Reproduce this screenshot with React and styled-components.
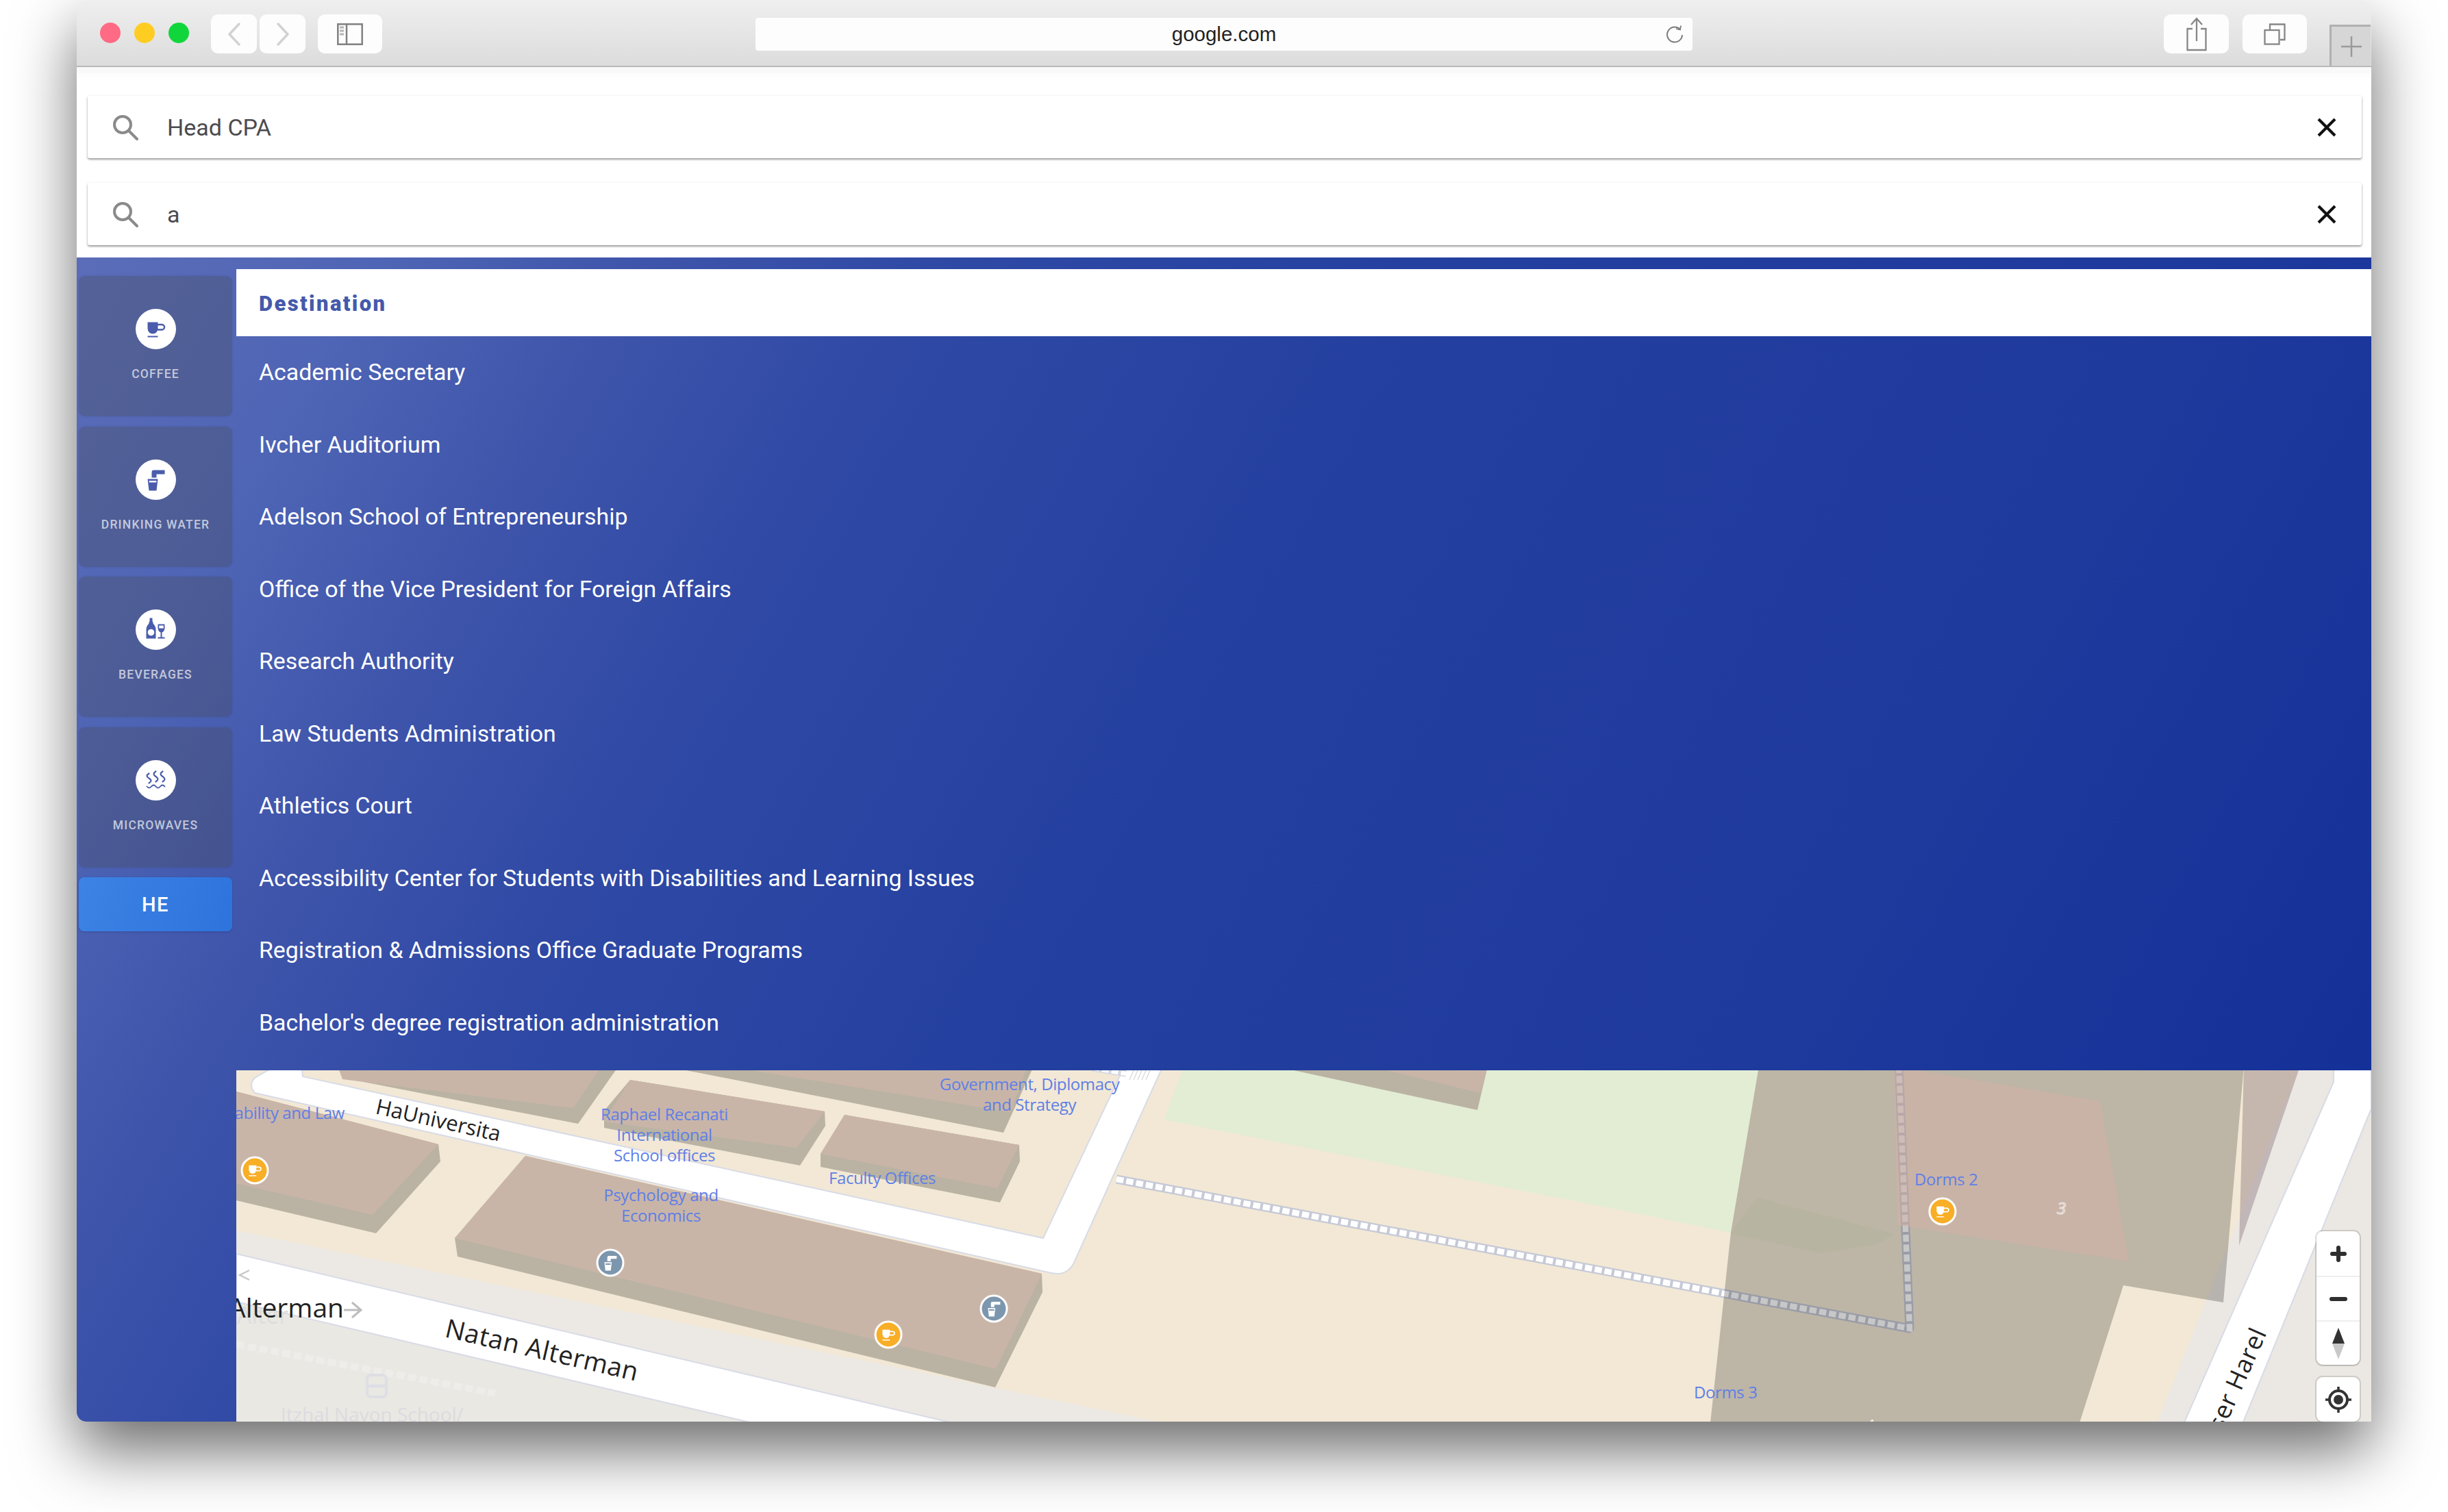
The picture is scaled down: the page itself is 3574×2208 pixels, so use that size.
import React from "react";
import styled, { createGlobalStyle } from "styled-components";

const Global = createGlobalStyle`
  html, body { margin: 0; padding: 0; background: #fff; }
  * { box-sizing: border-box; }
  body { font-family: Roboto, "Liberation Sans", sans-serif; }
`;

const Page = styled.div`
  width: 3574px;
  height: 2208px;
  padding: 0 112px;
  overflow: hidden;
  background: #fff;
`;
const Win = styled.div`
  width: 3350px;
  height: 2076px;
  display: flex;
  flex-direction: column;
  background: #fff;
  border-radius: 14px;
  box-shadow: 0 42px 92px rgba(0, 0, 0, 0.58);
`;
const Toolbar = styled.header`
  height: 98px;
  flex: none;
  display: flex;
  align-items: flex-start;
  padding: 21px 0 0 34px;
  background: linear-gradient(#efefef, #dcdcdc);
  border-bottom: 2px solid #b9b9b9;
  border-radius: 14px 14px 0 0;
`;
const Light = styled.span`
  width: 30px;
  height: 30px;
  margin: 12px 20px 0 0;
  border-radius: 50%;
  background: ${(p) => p.$c};
  flex: none;
`;
const ToolBtn = styled.button`
  width: ${(p) => p.$w}px;
  height: 57px;
  margin-left: ${(p) => p.$ml}px;
  flex: none;
  padding: 0;
  border: 0;
  border-radius: 10px;
  background: #fdfdfd;
  display: flex;
  align-items: center;
  justify-content: center;
`;
const Address = styled.div`
  width: 1368px;
  height: 48px;
  margin: 5px 688px 0 545px;
  flex: none;
  padding: 0 24px;
  position: relative;
  display: flex;
  align-items: center;
  justify-content: center;
  border-radius: 4px;
  background: #fdfdfd;
  color: #222;
  font: 400 29.5px "Liberation Sans", Arial, sans-serif;
`;
const Reload = styled.svg`
  position: absolute;
  right: 11px;
  top: 9px;
`;
const NewTab = styled.div`
  width: 60px;
  height: 60px;
  margin: 15px 0 0 33px;
  flex: none;
  display: flex;
  align-items: center;
  justify-content: center;
  background: #d6d6d6;
  border-top: 3px solid #b0b0b0;
  border-left: 3px solid #b0b0b0;
`;
const Searches = styled.div`
  flex: none;
  display: flex;
  flex-direction: column;
  gap: 36px;
  padding: 42px 14px 18px 16px;
  background: linear-gradient(#f9f9f9 0, #f9f9f9 9px, #fdfdfd 9px, #fdfdfd 15px, #fff 15px);
`;
const SearchBox = styled.div`
  height: 91px;
  display: flex;
  align-items: center;
  padding: 0 37px 0 36px;
  background: #fff;
  border-radius: 3px;
  box-shadow: 0 2px 3px rgba(0, 0, 0, 0.38), 0 0 4px rgba(0, 0, 0, 0.05);
`;
const SearchValue = styled.span`
  flex: 1;
  margin-left: 42px;
  color: #4b4b4f;
  font-size: 34px;
`;
const Main = styled.main`
  flex: 1;
  min-height: 0;
  display: grid;
  grid-template-columns: 233px 1fr;
  border-radius: 0 0 0 14px;
  overflow: hidden;
  background: linear-gradient(
    120deg,
    #5b6db9 0%,
    #4f65b5 10%,
    #3f55ab 19%,
    #2f49a5 29%,
    #233f9f 48%,
    #1f3a9d 72%,
    #112e97 100%
  );
`;
const Side = styled.nav`
  display: flex;
  flex-direction: column;
  gap: 14.5px;
  padding: 27px 6px 0 3px;
`;
const Card = styled.div`
  height: 205px;
  padding-top: 48px;
  display: flex;
  flex-direction: column;
  align-items: center;
  border-radius: 9px;
  background: rgba(72, 72, 80, 0.3);
  box-shadow: 0 0 3px rgba(40, 50, 100, 0.15);
`;
const Badge = styled.div`
  width: 59px;
  height: 59px;
  border-radius: 50%;
  background: #fff;
  display: flex;
  align-items: center;
  justify-content: center;
`;
const CardLabel = styled.span`
  margin-top: 26px;
  color: rgba(255, 255, 255, 0.68);
  font-size: 17.5px;
  line-height: 20px;
  font-weight: 500;
  letter-spacing: 1.2px;
`;
const Lang = styled.div`
  height: 79px;
  display: flex;
  align-items: center;
  justify-content: center;
  border-radius: 8px;
  background: linear-gradient(110deg, #3c83e4, #2e73dc);
  box-shadow: 0 1px 3px rgba(20, 40, 100, 0.3);
  color: #fff;
  font-size: 29px;
  font-weight: 500;
  letter-spacing: 1.4px;
`;
const Right = styled.section`
  min-width: 0;
  padding-top: 17px;
  display: flex;
  flex-direction: column;
`;
const ListHead = styled.div`
  height: 98px;
  flex: none;
  display: flex;
  align-items: center;
  padding: 3px 0 0 33px;
  background: #fff;
  color: #4559ab;
  font-size: 31px;
  font-weight: 900;
  letter-spacing: 2.4px;
`;
const Results = styled.ul`
  height: 1072px;
  flex: none;
  margin: 0;
  padding: 0 0 17px 33px;
  list-style: none;
  display: grid;
  grid-auto-rows: 1fr;
`;
const Result = styled.li`
  display: flex;
  align-items: center;
  color: #fff;
  font-size: 33.85px;
`;
const MapArea = styled.div`
  flex: 1;
  min-height: 0;
  position: relative;
  overflow: hidden;
  background: #f2e8d5;
`;
const MapSvg = styled.svg`
  display: block;
  width: 100%;
  height: 100%;
`;
const Controls = styled.div`
  position: absolute;
  left: 3037px;
  top: 235px;
  width: 63px;
  height: 195px;
  display: grid;
  grid-template-rows: 1fr 1fr 1fr;
  background: #fff;
  border-radius: 9px;
  box-shadow: 0 0 0 2px rgba(0, 0, 0, 0.12), 0 1px 2px rgba(0, 0, 0, 0.15);
`;
const ControlCell = styled.div`
  display: flex;
  align-items: center;
  justify-content: center;
  & + & {
    border-top: 2px solid #eeeeee;
  }
`;
const Locate = styled.div`
  position: absolute;
  left: 3037px;
  top: 448px;
  width: 63px;
  height: 65px;
  display: flex;
  align-items: center;
  justify-content: center;
  background: #fff;
  border-radius: 9px;
  box-shadow: 0 0 0 2px rgba(0, 0, 0, 0.12);
`;

const results = [
  "Academic Secretary",
  "Ivcher Auditorium",
  "Adelson School of Entrepreneurship",
  "Office of the Vice President for Foreign Affairs",
  "Research Authority",
  "Law Students Administration",
  "Athletics Court",
  "Accessibility Center for Students with Disabilities and Learning Issues",
  "Registration & Admissions Office Graduate Programs",
  "Bachelor's degree registration administration",
];

const SearchIcon = () => (
  <svg width="38" height="38" viewBox="0 0 38 38" fill="none" stroke="#8a8a8a" strokeWidth="4">
    <circle cx="15" cy="15" r="12" />
    <path d="M24 24l12 12" strokeLinecap="round" />
  </svg>
);
const CloseIcon = () => (
  <svg width="28" height="28" viewBox="0 0 28 28" stroke="#111" strokeWidth="4.2" strokeLinecap="butt">
    <path d="M2 2l24 24M26 2L2 26" />
  </svg>
);

const Coffee = ({ c = "#4a5cab" }) => (
  <g>
    <path fill={c} d="M-12-10H3V-1A7.5 8 0 0 1-12-1Z" />
    <rect x="0" y="-6.5" width="12.5" height="7.5" rx="3.7" fill="none" stroke={c} strokeWidth="2.4" />
    <rect x="-12" y="10" width="15" height="2" fill={c} />
  </g>
);
const Water = ({ c = "#4a5cab" }) => (
  <g fill={c}>
    <path d="M-6-11a3 3 0 0 1 3-3H13V-8H1V-3H-6Z" />
    <path d="M-12-1H3L1 16H-10ZM-10 1.500L-9.600 4H.6L1 1.500Z" fillRule="evenodd" />
  </g>
);
const Bottle = ({ c = "#4a5cab" }) => (
  <g>
    <path fill={c} d="M-9-17H-5V-12L-4-11V-9C-1-6 0-3 0 0V13H-14V0C-14-3-13-6-10-9V-11L-9-12Z" />
    <circle cx="-7" cy="4" r="4.800" fill="#fff" />
    <path fill="none" stroke={c} strokeWidth="1.800" d="M4-7H12C13 0 11 3 8 3S3 0 4-7Z" />
    <path fill={c} d="M4-2H12C12 1 10 3 8 3S4 1 4-2ZM7 3H9V11H13V13H3V11H7Z" />
  </g>
);
const Steam = ({ c = "#4a5cab" }) => (
  <g fill="none" stroke={c} strokeWidth="2.200" strokeLinecap="round">
    <path d="M-10-10c-4 2.500-4 4.500 0 7s4 4.500 0 7" />
    <path d="M0-13c-4 2.500-4 5 0 7.500s4 5 0 7.500" />
    <path d="M10-13c-4 2.500-4 5 0 7.500s4 5 0 7.500" />
    <path d="M-13 9q3.250 4 6.500 0t6.500 0t6.500 0t6.500 0" strokeWidth="1.800" />
  </g>
);
const Glyph = ({ children }) => (
  <svg width="59" height="59" viewBox="-29.500 -29.500 59 59">
    {children}
  </svg>
);

const cats = [
  ["COFFEE", <Coffee />],
  ["DRINKING WATER", <Water />],
  ["BEVERAGES", <Bottle />],
  ["MICROWAVES", <Steam />],
];

const Pin = ({ x, y, c, children }) => (
  <g transform={`translate(${x} ${y})`}>
    <circle r="19" fill={c} stroke="#fff" strokeWidth="3" />
    <g transform="scale(.72)">{children}</g>
  </g>
);

const Poly = ({ p, f, s, sw }) => <polygon points={p} fill={f} stroke={s} strokeWidth={sw} />;

const TOP = "#c9b5a8";
const SIDE = "#bab3a3";
const labelFont = '"Open Sans", "Noto Sans", sans-serif';

const Label = ({ x, y, a = "middle", children, size = 24 }) => (
  <text x={x} y={y} textAnchor={a} fill="#5f7fe6" fontFamily={labelFont} fontSize={size} letterSpacing="-0.4">
    {children}
  </text>
);
const Road = ({ x, y, r, size, a = "start", children, f = "#222", ls = 0 }) => (
  <text
    x={x}
    y={y}
    transform={r ? `rotate(${r} ${x} ${y})` : undefined}
    textAnchor={a}
    fill={f}
    fontFamily={labelFont}
    fontSize={size}
    letterSpacing={ls}
  >
    {children}
  </text>
);

const MapDrawing = () => (
  <MapSvg viewBox="345 1561 3117 513" preserveAspectRatio="none">
    <rect x="345" y="1555" width="3117" height="525" fill="#f2e8d5" />
    {/* park */}
    <Poly p="1728,1555 1700,1633 2400,1772 2527,1798 2568,1555" f="#e2edd4" />
    {/* sidewalks */}
    <Poly p="345,1795 1700,2076 345,2076" f="#ece8e4" />
    <Poly p="345,1899 1099,2076 345,2076" f="#e9e8e3" />
    <Poly p="3358,1555 3462,1555 3462,2076 3149,2076" f="#ebe7e2" />
    {/* buildings */}
    <Poly p="496,1555 500,1572 844,1639 903,1555" f={SIDE} />
    <Poly p="493,1555 500,1574 837,1616 878,1555" f={TOP} />
    <Poly p="971,1555 1465,1652 1509,1555" f={SIDE} />
    <Poly p="1060,1555 1475,1622 1500,1555" f={TOP} />
    <Poly p="920,1575 1204,1621 1205,1642 1168,1700 882,1645 882,1620" f={SIDE} />
    <Poly p="920,1575 1204,1621 1163,1674 882,1636" f={TOP} />
    <Poly p="1233,1626 1488,1670 1489,1694 1460,1754 1198,1702 1198,1683" f={SIDE} />
    <Poly p="1233,1626 1488,1670 1456,1733 1198,1683" f={TOP} />
    <Poly p="345,1592 640,1669 643,1694 549,1799 345,1751" f={SIDE} />
    <Poly p="345,1592 640,1669 544,1772 345,1726" f={TOP} />
    <Poly p="767,1686 1521,1858 1522,1885 1453,2024 668,1833 664,1806" f={SIDE} />
    <Poly p="767,1686 1521,1858 1454,1997 664,1806" f={TOP} />
    <Poly p="1861,1555 2157,1619 2172,1555" f={SIDE} />
    <Poly p="2000,1555 2161,1594 2172,1555" f={TOP} />
    {/* roads */}
    <path
      d="M410 1550H440L442 1570L1523 1806L1644 1550H1700L1567 1844Q1556 1862 1535 1857L372 1594Q362 1582 372 1572Z"
      fill="#fff"
      stroke="#d8dbe6"
      strokeWidth="2"
    />
    <g stroke="#dcdcdc" strokeWidth="1.500">
      <path d="M1655 1561l-6 14M1661 1561l-6 14M1667 1561l-6 14M1673 1561l-6 14M1679 1561l-6 14" />
    </g>
    <Poly p="345,1829 1391,2076 1099,2076 345,1899" f="#fff" s="#d8dbe6" sw="2" />
    {/* railway */}
    <g fill="none">
      <path d="M1595 1558L1644 1566" stroke="#d4d6df" strokeWidth="9" />
      <path d="M1595 1558L1644 1566" stroke="#fff" strokeWidth="6" strokeDasharray="10 4" />
      <path d="M1630 1720L2788 1938L2772 1550" stroke="#c6c9d6" strokeWidth="13" strokeLinejoin="round" />
      <path d="M1630 1720L2788 1938L2772 1550" stroke="#fff" strokeWidth="8.500" strokeDasharray="10.500 4" />
      <path d="M345 1961L723 2033" stroke="#eeedea" strokeWidth="10" strokeDasharray="12 5" />
    </g>
    {/* translucent overlay building */}
    <Poly p="2568,1555 3276,1555 3246,1900 3100,1875 3036,2076 2497,2076 2527,1798" f="rgba(0,0,0,0.22)" />
    <Poly p="3276,1555 3358,1555 3269,1817" f="rgba(60,30,50,0.24)" />
    <Poly p="2527,1798 2565,1747 2765,1800 2740,1815 2660,1828 2527,1800" f="rgba(120,180,110,0.09)" />
    <Poly p="2765,1555 3066,1606 3108,1840 2770,1787" f="rgba(213,178,168,0.5)" />
    {/* right road */}
    <Poly p="3407,1550 3462,1550 3462,1617 3272,2082 3186,2082 3407,1578" f="#fff" s="#d8dbe6" sw="2" />

    {/* road names */}
    <Road x="547" y="1624" r="12.700" size="31">HaUniversita</Road>
    <Road x="648" y="1950" r="13" size="38" ls="0.5">Natan Alterman</Road>
    <Road x="346" y="1931" size="34" f="#ddd">Alter</Road>
    <Road x="502" y="1922" a="end" size="39">Alterman</Road>
    <path d="M502 1911H526M514 1900L527 1911L514 1922" fill="none" stroke="#bdbdbd" strokeWidth="3" />
    <path d="M364 1853L350 1860L364 1867" fill="none" stroke="#c8c8c8" strokeWidth="2.500" />
    <Road x="3310" y="1944" r="-66" a="end" size="36" ls="0.8">Isser Harel</Road>
    <text x="410" y="2074" fill="#dcdbe0" fontFamily={labelFont} fontSize="28">Itzhal Navon School/</text>
    <g fill="none" stroke="#dedee5" strokeWidth="4">
      <rect x="536" y="2006" width="28" height="32" rx="6" />
      <path d="M538 2022H562" />
    </g>

    {/* place names */}
    <Label x="503" y="1632" a="end">ability and Law</Label>
    <Label x="970" y="1634">Raphael Recanati</Label>
    <Label x="970" y="1664">International</Label>
    <Label x="970" y="1694">School offices</Label>
    <Label x="965" y="1752">Psychology and</Label>
    <Label x="965" y="1782">Economics</Label>
    <Label x="1210" y="1727" a="start">Faculty Offices</Label>
    <Label x="1503" y="1590">Government, Diplomacy</Label>
    <Label x="1503" y="1620">and Strategy</Label>
    <Label x="2795" y="1729" a="start">Dorms 2</Label>
    <Label x="2473" y="2040" a="start">Dorms 3</Label>
    <text x="3003" y="1771" fill="none" stroke="#ece6e2" strokeWidth="1.200" fontFamily={labelFont} fontStyle="italic" fontSize="24">3</text>
    <text x="2724" y="2088" fill="#f6f2ea" fontFamily={labelFont} fontSize="24">4</text>

    {/* pins */}
    <Pin x={372} y={1707} c="#f8ae26"><Coffee c="#fff" /></Pin>
    <Pin x={1297} y={1947} c="#f8ae26"><Coffee c="#fff" /></Pin>
    <Pin x={2836} y={1767} c="#f8ae26"><Coffee c="#fff" /></Pin>
    <Pin x={891} y={1842} c="#7c96ad"><Water c="#fff" /></Pin>
    <Pin x={1451} y={1909} c="#7c96ad"><Water c="#fff" /></Pin>
  </MapSvg>
);

export default function App() {
  return (
    <Page>
      <Global />
      <Win>
        <Toolbar>
          <Light $c="#ff6a84" />
          <Light $c="#ffcd22" />
          <Light $c="#10d63c" />
          <ToolBtn $w={67} $ml={12}>
            <svg width="20" height="34" viewBox="0 0 20 34" fill="none" stroke="#d2d2d2" strokeWidth="3.500" strokeLinecap="round" strokeLinejoin="round">
              <path d="M17 2L3 17L17 32" />
            </svg>
          </ToolBtn>
          <ToolBtn $w={67} $ml={4}>
            <svg width="20" height="34" viewBox="0 0 20 34" fill="none" stroke="#d2d2d2" strokeWidth="3.500" strokeLinecap="round" strokeLinejoin="round">
              <path d="M3 2L17 17L3 32" />
            </svg>
          </ToolBtn>
          <ToolBtn $w={94} $ml={18}>
            <svg width="38" height="32" viewBox="0 0 38 32" fill="none" stroke="#808080" strokeWidth="2.500">
              <rect x="1.300" y="1.300" width="35.400" height="29.400" />
              <path d="M14 1V31" />
              <path d="M4 6H10M4 11H10M4 16H10" strokeWidth="3" stroke="#b5b5b5" />
            </svg>
          </ToolBtn>
          <Address>
            google.com
            <Reload width="30" height="30" viewBox="0 0 30 30" fill="none" stroke="#7c7c7c" strokeWidth="2">
              <path d="M23 8A11 11 0 1 0 26 16" />
              <path d="M17 7L23 8.500L24 2.500" strokeWidth="1.800" />
            </Reload>
          </Address>
          <ToolBtn $w={95} $ml={0}>
            <svg width="30" height="50" viewBox="0 0 30 50" fill="none" stroke="#868686" strokeWidth="2.300">
              <path d="M9 17H1.500V48H28.500V17H21" />
              <path d="M15 35V2M7 11L15 2L23 11" />
            </svg>
          </ToolBtn>
          <ToolBtn $w={94} $ml={20}>
            <svg width="32" height="32" viewBox="0 0 32 32" fill="none" stroke="#868686" strokeWidth="2.300">
              <rect x="1.500" y="10" width="21" height="20.500" />
              <path d="M9 9V1.500H30.500V24H24" />
            </svg>
          </ToolBtn>
          <NewTab>
            <svg width="30" height="30" viewBox="0 0 30 30" stroke="#9a9a9a" strokeWidth="2.500">
              <path d="M15 0V30M0 15H30" />
            </svg>
          </NewTab>
        </Toolbar>

        <Searches>
          <SearchBox>
            <SearchIcon />
            <SearchValue>Head CPA</SearchValue>
            <CloseIcon />
          </SearchBox>
          <SearchBox>
            <SearchIcon />
            <SearchValue>a</SearchValue>
            <CloseIcon />
          </SearchBox>
        </Searches>

        <Main>
          <Side>
            {cats.map(([name, icon]) => (
              <Card key={name}>
                <Badge>
                  <Glyph>{icon}</Glyph>
                </Badge>
                <CardLabel>{name}</CardLabel>
              </Card>
            ))}
            <Lang>HE</Lang>
          </Side>
          <Right>
            <ListHead>Destination</ListHead>
            <Results>
              {results.map((r) => (
                <Result key={r}>{r}</Result>
              ))}
            </Results>
            <MapArea>
              <MapDrawing />
              <Controls>
                <ControlCell>
                  <svg width="26" height="26" viewBox="0 0 26 26" stroke="#2f2f2f" strokeWidth="6" strokeLinecap="round">
                    <path d="M13 4V22M4 13H22" />
                  </svg>
                </ControlCell>
                <ControlCell>
                  <svg width="26" height="8" viewBox="0 0 26 8" stroke="#2f2f2f" strokeWidth="6" strokeLinecap="round">
                    <path d="M3 4H23" />
                  </svg>
                </ControlCell>
                <ControlCell>
                  <svg width="20" height="46" viewBox="0 0 20 46">
                    <path d="M10 0L19 23H1Z" fill="#333" />
                    <path d="M10 46L19 23H1Z" fill="#c9c9c9" />
                  </svg>
                </ControlCell>
              </Controls>
              <Locate>
                <svg width="40" height="40" viewBox="0 0 40 40" fill="none" stroke="#333" strokeWidth="4">
                  <circle cx="20" cy="20" r="13" />
                  <circle cx="20" cy="20" r="7" fill="#333" stroke="none" />
                  <path d="M20 1V7M20 33V39M1 20H7M33 20H39" strokeWidth="3.500" />
                </svg>
              </Locate>
            </MapArea>
          </Right>
        </Main>
      </Win>
    </Page>
  );
}
